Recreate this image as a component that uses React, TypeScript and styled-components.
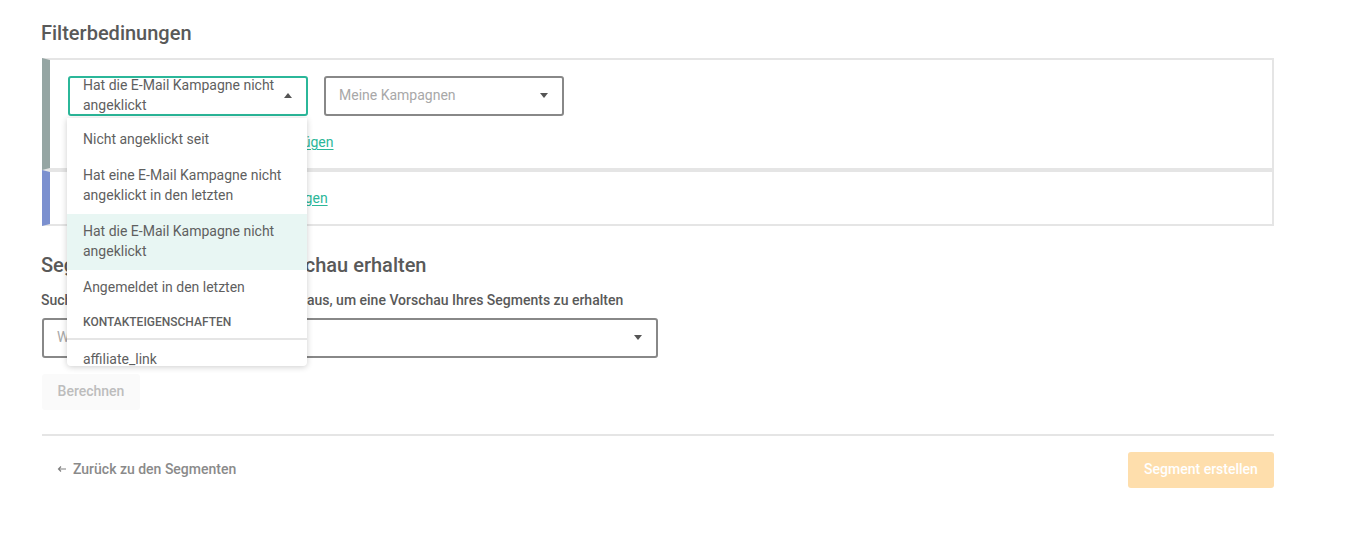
import React from "react";
import styled, { createGlobalStyle } from "styled-components";

const Global = createGlobalStyle`
  html, body { margin: 0; padding: 0; background: #fff; }
  body { font-family: Roboto, "Liberation Sans", sans-serif; color: #555; }
`;
const Page = styled.div`
  width: 1232px;
  padding: 21px 0 58px 42px;
  display: flex;
  flex-direction: column;
`;
const Title = styled.h2`
  margin: 0 0 0 -1px;
  font-size: 20px;
  line-height: 24px;
  font-weight: 500;
  color: #595959;
`;
const PreviewTitle = styled(Title)`
  margin-top: 27px;
`;
const Rules = styled.div`
  margin-top: 13px;
  display: flex;
  flex-direction: column;
`;
const Rule = styled.div<{ $accent: string }>`
  display: flex;
  flex-direction: column;
  align-items: flex-start;
  box-sizing: border-box;
  padding: 16px 16px 0 18px;
  border: 2px solid #e5e5e5;
  border-left: 8px solid ${(p) => p.$accent};
`;
const FirstRule = styled(Rule)`
  height: 112px;
`;
const SecondRule = styled(Rule)`
  height: 56px;
`;
const Controls = styled.div`
  display: flex;
  gap: 16px;
`;
const SelectBox = styled.div<{ $open?: boolean; $width: number }>`
  position: relative;
  box-sizing: border-box;
  width: ${(p) => p.$width}px;
  height: 40px;
  border: 2px solid ${(p) => (p.$open ? "#2bb799" : "#888")};
  border-radius: 3px;
  padding: 0 24px 2px 13px;
  display: flex;
  align-items: center;
  font-size: 14px;
  line-height: 20px;
  background: #fff;
`;
const Value = styled.span`
  color: #5f5f5f;
`;
const Placeholder = styled.span`
  color: #a8a8a8;
`;
const Caret = styled.span<{ $up?: boolean }>`
  position: absolute;
  right: 14px;
  top: 50%;
  margin-top: -3px;
  width: 0;
  height: 0;
  border-left: 4.5px solid transparent;
  border-right: 4.5px solid transparent;
  ${(p) =>
    p.$up ? "border-bottom: 5px solid #555;" : "border-top: 5px solid #555;"}
`;
const Menu = styled.div`
  position: absolute;
  left: -3px;
  top: 40px;
  width: 240px;
  height: 248px;
  overflow: hidden;
  background: #fff;
  border-radius: 0 0 4px 4px;
  box-shadow: 0 1px 6px rgba(0, 0, 0, 0.2);
  padding-top: 4px;
  box-sizing: border-box;
  z-index: 5;
`;
const Option = styled.div<{ $active?: boolean }>`
  padding: 7px 16px 9px;
  font-size: 14px;
  line-height: 20px;
  color: #5f5f5f;
  background: ${(p) => (p.$active ? "#e8f6f3" : "transparent")};
`;
const GroupHeader = styled.div`
  height: 34px;
  box-sizing: border-box;
  padding: 0 16px;
  margin-bottom: 2px;
  display: flex;
  align-items: center;
  font-size: 12px;
  font-weight: 500;
  color: #5f5f5f;
  border-bottom: 2px solid #e5e5e5;
`;
const AddLink = styled.a<{ $top: number }>`
  margin-top: ${(p) => p.$top}px;
  font-size: 14px;
  line-height: 20px;
  color: #2bb799;
  text-decoration: underline;
  text-underline-offset: 2px;
  cursor: pointer;
`;
const Hint = styled.p`
  margin: 13px 0 0 -1px;
  font-size: 14px;
  line-height: 20px;
  font-weight: 500;
  color: #595959;
`;
const PreviewSelect = styled(SelectBox)`
  margin-top: 8px;
`;
const ComputeButton = styled.button`
  margin-top: 16px;
  padding: 0 0 2px;
  align-self: flex-start;
  width: 98px;
  height: 36px;
  border: 0;
  border-radius: 3px;
  background: #fafafa;
  color: #bdbdbd;
  font: 500 14px Roboto, sans-serif;
`;
const Divider = styled.hr`
  width: 100%;
  margin: 24px 0 0;
  border: 0;
  height: 2px;
  background: #e5e5e5;
`;
const Footer = styled.div`
  margin-top: 16px;
  display: flex;
  align-items: center;
  justify-content: space-between;
`;
const BackLink = styled.a`
  display: flex;
  align-items: center;
  padding: 0 0 2px 15px;
  gap: 6px;
  font-size: 14px;
  font-weight: 500;
  color: #8a8a8a;
  cursor: pointer;
`;
const CreateButton = styled.button`
  width: 146px;
  height: 36px;
  padding: 0 0 2px;
  border: 0;
  border-radius: 3px;
  background: #fedeac;
  color: #fff;
  font: 500 14px Roboto, sans-serif;
`;

export default function App() {
  return (
    <Page>
      <Global />
      <Title>Filterbedinungen</Title>
      <Rules>
        <FirstRule $accent="#95a5a3">
          <Controls>
            <SelectBox $open $width={240}>
              <Value>Hat die E-Mail Kampagne nicht angeklickt</Value>
              <Caret $up />
              <Menu>
                <Option>Nicht angeklickt seit</Option>
                <Option>Hat eine E-Mail Kampagne nicht angeklickt in den letzten</Option>
                <Option $active>Hat die E-Mail Kampagne nicht angeklickt</Option>
                <Option>Angemeldet in den letzten</Option>
                <GroupHeader>KONTAKTEIGENSCHAFTEN</GroupHeader>
                <Option>affiliate_link</Option>
              </Menu>
            </SelectBox>
            <SelectBox $width={240}>
              <Placeholder>Meine Kampagnen</Placeholder>
              <Caret />
            </SelectBox>
          </Controls>
          <AddLink $top={16}>Weitere Status-UND-Bedingung hinzufügen</AddLink>
        </FirstRule>
        <SecondRule $accent="#7b90cf">
          <AddLink $top={0}>Weitere Kontakt-ODER-Gruppe hinzufügen</AddLink>
        </SecondRule>
      </Rules>
      <PreviewTitle>Segment berechnen und Vorschau erhalten</PreviewTitle>
      <Hint>Suchen Sie einen Kontakt aus Ihren Listen aus, um eine Vorschau Ihres Segments zu erhalten</Hint>
      <PreviewSelect $width={616}>
        <Placeholder>Wählen Sie einen Kontakt</Placeholder>
        <Caret />
      </PreviewSelect>
      <ComputeButton>Berechnen</ComputeButton>
      <Divider />
      <Footer>
        <BackLink>
          <svg width="10" height="8" viewBox="0 0 10 8" fill="none" stroke="#808080" strokeWidth="1.2">
            <path d="M9 4H1.5M4 1.5 1.5 4 4 6.5" />
          </svg>
          Zurück zu den Segmenten
        </BackLink>
        <CreateButton>Segment erstellen</CreateButton>
      </Footer>
    </Page>
  );
}
